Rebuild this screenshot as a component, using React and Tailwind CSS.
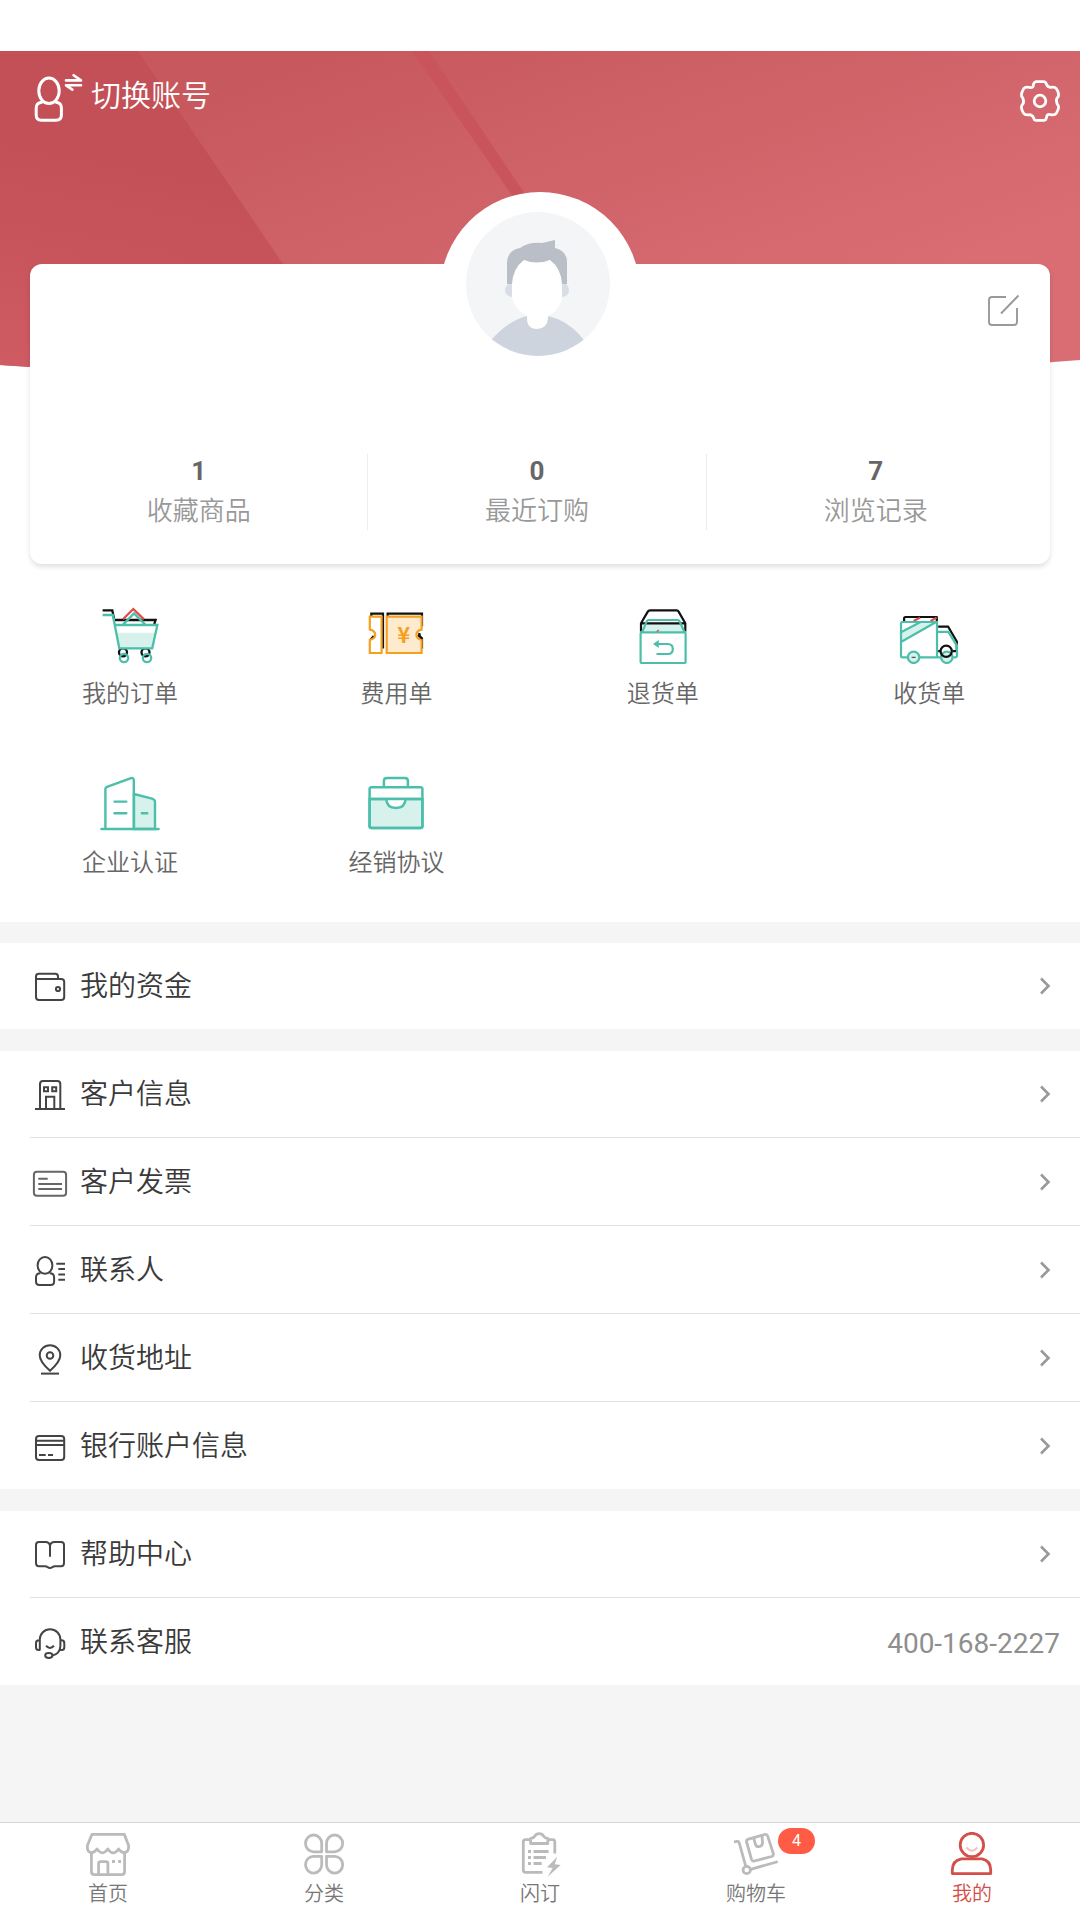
import React, { useState } from "react";

const TEAL = "#4bbfaa";
const MINT = "#d7f2ec";

function SwitchUserIcon() {
  return (
    <svg width="54" height="50" viewBox="0 0 54 50" fill="none" stroke="#fff" strokeWidth="3" strokeLinecap="round" strokeLinejoin="round">
      <ellipse cx="19" cy="17.8" rx="10.2" ry="12.8" />
      <path d="M11.7 29.2C8.2 29.6 6.2 31.6 6.2 35V42Q6.2 47.3 11.4 47.3H26Q31.4 47.3 31.4 42V35C31.4 31.6 29.7 29.6 26.2 29.2" />
      <path d="M36 7.4H51L43.6 2.2M51 12.3H36L42.4 16.6" strokeWidth="2.6" />
    </svg>
  );
}

function GearIcon() {
  return (
    <svg width="44" height="44" viewBox="-22 -22 44 44" fill="none" stroke="#fff" strokeWidth="2.8" strokeLinejoin="round">
      <circle r="5.8" />
      <path d="M-4 -19.4H4Q6 -19 6.6 -16.6T10.5 -13.6Q14.5 -14.6 16.3 -12.4T18.6 -6.6Q18.8 -4.6 17.2 -3T17.2 3Q18.8 4.6 18.6 6.6T16.3 12.4Q14.5 14.6 10.5 13.6T6.6 16.6Q6 19 4 19.4H-4Q-6 19 -6.6 16.6T-10.5 13.6Q-14.5 14.6 -16.3 12.4T-18.6 6.6Q-18.8 4.6 -17.2 3T-17.2 -3Q-18.8 -4.6 -18.6 -6.6T-16.3 -12.4Q-14.5 -14.6 -10.5 -13.6T-6.6 -16.6Q-6 -19 -4 -19.4Z" />
    </svg>
  );
}

function HeaderBackground() {
  return (
    <svg className="absolute inset-0" width="1080" height="320" viewBox="0 51 1080 320">
      <defs>
        <linearGradient id="left" gradientUnits="userSpaceOnUse" x1="60" y1="51" x2="0" y2="371">
          <stop offset="0.3" stopColor="#c35056" />
          <stop offset="1" stopColor="#cf5b63" />
        </linearGradient>
        <linearGradient id="main" gradientUnits="userSpaceOnUse" x1="340" y1="51" x2="500" y2="500">
          <stop offset="0" stopColor="#c7595e" />
          <stop offset="0.85" stopColor="#d96d73" />
          <stop offset="1" stopColor="#d96d73" />
        </linearGradient>
      </defs>
      <clipPath id="sheet">
        <path d="M0 51H1080V360Q540 402 0 365Z" />
      </clipPath>
      <g clipPath="url(#sheet)">
        <rect y="51" width="1080" height="330" fill="url(#main)" />
        <path d="M0 51H138L356 371H0Z" fill="url(#left)" />
        <path d="M412 51H429L525 194L560 246H546L511 194Z" fill="#c9545c" />
      </g>
    </svg>
  );
}

function Avatar() {
  return (
    <svg width="144" height="144" viewBox="466 212 144 144">
      <clipPath id="face">
        <circle cx="538" cy="284" r="72" />
      </clipPath>
      <circle cx="538" cy="284" r="72" fill="#f3f5f7" />
      <g clipPath="url(#face)">
        <path d="M480 356L492 339Q508 321 527 316H548Q569 321 583 339L596 356Z" fill="#ced4de" />
        <path d="M512 283Q505 284 505 290T512 297ZM562 283Q569 284 569 290T562 297Z" fill="#d8dee4" />
        <path d="M507 284V262Q508 250 520 248Q528 242 542 243L555 240V248Q567 251 567 262V284H512Z" fill="#babfc7" />
        <path d="M512 284Q513 268 524 260Q537 265 550 260Q561 268 562 284V294Q562 309 548 316V318Q547 329 537 329T527 318V316Q512 308 512 294Z" fill="#fff" />
      </g>
    </svg>
  );
}

function EditIcon() {
  return (
    <svg width="34" height="34" viewBox="0 0 34 34" fill="none" stroke="#999" strokeWidth="1.9">
      <path d="M20 3H6Q3 3 3 6V28Q3 31 6 31H28Q31 31 31 28V14" />
      <path d="M15 19.5L32.5 1.5" />
    </svg>
  );
}

function OrderIcon() {
  return (
    <svg width="60" height="60" viewBox="0 0 60 60" fill="none" strokeWidth="2.3">
      <path d="M2.6 6.3H12.3L14 14.5M15 16H55.6L54 21" stroke="#111" />
      <circle cx="23" cy="48.3" r="4" stroke="#111" />
      <circle cx="45.5" cy="48.3" r="4" stroke="#111" />
      <path d="M23 15.3L33.3 5L44 15.3" stroke="#e04b48" />
      <path d="M16 28.7H55.7L52.2 44.3H19.5Z" fill={MINT} />
      <path d="M2.6 11H12.8L19.3 44.3H52.2L57.4 21H14.6M23 20.6L34 9.4L45.3 20.6" stroke={TEAL} />
      <circle cx="24" cy="54" r="4.2" stroke={TEAL} />
      <circle cx="47" cy="54" r="4.2" stroke={TEAL} />
    </svg>
  );
}

function FeeIcon() {
  return (
    <svg width="60" height="60" viewBox="-0.8 0 60 60" fill="none" strokeWidth="2.2">
      <path d="M4.5 13V9.7H16.2V44.5M20.8 13V9.7H55.2V22M55.2 44.5V34.5L51 31M3.8 35.5L7 32" stroke="#111" />
      <path d="M3 12.7H14.8V49H3V35.8Q8.4 35 8.4 30.8T3 25.6Z" fill="#fff" stroke="#f6a01f" />
      <path d="M19.9 12.7H54.8V25.6Q49.6 26.6 49.6 30.8T54.8 35.8V49H19.9Z" fill="#feebcd" stroke="#f6a01f" />
      <path d="M52.6 29Q52 32 55.4 34.5" stroke="#111" />
      <text x="36.9" y="39.2" textAnchor="middle" fill="#f6a01f" stroke="none" fontSize="22" fontWeight="700" fontFamily="'Noto Sans CJK SC', sans-serif">¥</text>
    </svg>
  );
}

function ReturnIcon() {
  return (
    <svg width="60" height="60" viewBox="0 0 60 60" fill="none" strokeWidth="2.2" strokeLinejoin="round">
      <path d="M10 27.5L13.5 19H46.5L51 27.5Z" fill={MINT} />
      <path d="M8 27.5V19.3L14.8 7.6Q15.6 6.3 17 6.3H43.6Q45 6.3 45.6 7.6L52.3 19.3V27.5M8 19.3H52.3" stroke="#111" />
      <path d="M9.2 28L13.7 17.4Q14.3 16 15.7 16H44.6Q46 16 46.6 17.4L51.4 28" stroke={TEAL} />
      <rect x="7.6" y="28.4" width="45" height="30.6" rx="1.2" stroke={TEAL} />
      <path d="M23.5 27.4L26 26" stroke="#e04b48" strokeWidth="1.2" />
      <path d="M23.5 50H34.8Q39.8 50 39.8 45T34.8 40H24" stroke={TEAL} />
      <path d="M20 40L25.8 36V44Z" fill={TEAL} />
    </svg>
  );
}

function ReceiveIcon() {
  return (
    <svg width="60" height="60" viewBox="-0.6 0 60 60" fill="none" strokeWidth="2.2" strokeLinejoin="round">
      <path d="M1.4 28.3L21 18H37.2L1.4 38Z" fill={MINT} />
      <path d="M49 24L57.5 38V52L54 40L48 28Z" fill={MINT} />
      <path d="M4.5 17V14.5Q4.5 13 6 13H37.2V17.5M38.5 22.7H48.6L57.2 37.5V47.2H53M38.5 47.2H41" stroke="#111" />
      <path d="M14 17L20.5 13.6M31 17L37 13.6" stroke="#e04b48" />
      <path d="M8 53.3H3Q1.4 53.3 1.4 51.8V19.6Q1.4 18 3 18H37.4V53.3H20M1.4 28.3L21 18M1.4 38L36.5 18M38 27.8H48.7L57.4 41.5V51.6Q57.4 53.3 55.6 53.3H53.5M37 53.3H41" stroke={TEAL} />
      <circle cx="14" cy="53.3" r="5.7" fill={MINT} stroke={TEAL} />
      <circle cx="47.2" cy="53.3" r="5.7" fill={MINT} stroke={TEAL} />
      <path d="M12 53.3H16" stroke="#333" strokeWidth="1" />
      <circle cx="46.6" cy="47.2" r="5.6" stroke="#111" />
    </svg>
  );
}

function CompanyIcon() {
  return (
    <svg width="60" height="60" viewBox="0 0 60 60" fill="none" stroke={TEAL} strokeWidth="2.4" strokeLinecap="round">
      <path d="M34 21L52 25.6Q55 26.4 55 29V56H34Z" fill={MINT} />
      <path d="M1.4 56H58.6M5.4 56V16Q5.4 14.4 7 13.8L31 5.2Q33.8 4.4 33.8 7.5V56" />
      <path d="M14.5 28.6H26.3M14.5 40.3H26.3M41.8 40.3H47.3" />
    </svg>
  );
}

function ContractIcon() {
  return (
    <svg width="60" height="60" viewBox="-0.2 0 60 60" fill="none" stroke={TEAL} strokeWidth="2.5">
      <path d="M3.4 26H56.2V53Q56.2 55 54.2 55H5.4Q3.4 55 3.4 53Z" fill={MINT} />
      <rect x="3.4" y="14.3" width="52.8" height="40.7" rx="2" />
      <path d="M17.7 14V8Q17.7 5 20.7 5H38.7Q41.7 5 41.7 8V14" />
      <path d="M20 26Q20.5 35 29.7 35T39.4 26" fill="#fff" />
      <path d="M3.4 26H56.2" />
    </svg>
  );
}

function RowIcon({ children, color = "#444" }) {
  return (
    <svg className="mt-0.5 shrink-0" width="36" height="36" viewBox="0 0 36 36" fill="none" stroke={color} strokeWidth="2">
      {children}
    </svg>
  );
}

const rowIcons = {
  wallet: (
    <RowIcon>
      <path d="M4 10V7.5Q4 4.8 6.8 4.8H23.2Q26 4.8 26 7.5V10M4 10H29.2Q32.2 10 32.2 13V28Q32.2 31 29.2 31H7Q4 31 4 28V9" />
      <circle cx="26" cy="20" r="2.1" />
    </RowIcon>
  ),
  building: (
    <RowIcon>
      <path d="M3 32H33M8 32V7Q8 4 11 4H25.3Q28.3 4 28.3 7V32M14 32V19.8H22.3V32" />
      <path d="M12 10.2H16V14.2H12ZM20.2 10.2H24.2V14.2H20.2Z" />
    </RowIcon>
  ),
  invoice: (
    <RowIcon color="#666">
      <rect x="1.9" y="6.8" width="32.2" height="24" rx="3" />
      <path d="M6.3 13.7H15.7M6.3 19H30M6.3 24H30" />
    </RowIcon>
  ),
  contact: (
    <RowIcon>
      <ellipse cx="13" cy="12.4" rx="7.4" ry="8.4" />
      <path d="M8.5 20.2C5.5 20.2 4 21.8 4 24.5V28.5Q4 32 7.5 32H18.6Q22.1 32 22.1 28.5V24.5C22.1 21.8 20.5 20.2 17.6 20.2" />
      <path d="M24.3 10.7H33M26.3 16H33M26.3 21.5H33M26.3 26.7H33" />
    </RowIcon>
  ),
  pin: (
    <RowIcon>
      <path d="M18 29.8C12 24.5 7.7 20 7.7 14.3A10.3 10.1 0 0 1 28.3 14.3C28.3 20 24 24.5 18 29.8Z" />
      <circle cx="18" cy="14.5" r="3.3" />
      <path d="M9 32.6H27" />
    </RowIcon>
  ),
  card: (
    <RowIcon>
      <rect x="4" y="7" width="28.2" height="24" rx="3" />
      <path d="M4 11.8H32M4 16H32M7 26H13.7M16 26H21" />
    </RowIcon>
  ),
  book: (
    <RowIcon>
      <path d="M18 19.7V9Q17.5 4.9 13.5 4.9H7Q4 4.9 4 8V26Q4 29.2 7 29.2H13Q14.6 29.2 15.6 30.2Q18 31.8 20.4 30.2Q21.4 29.2 23 29.2H29Q32 29.2 32 26V8Q32 4.9 29 4.9H22.5Q18.5 4.9 18 9" />
    </RowIcon>
  ),
  service: (
    <RowIcon>
      <path d="M7.8 25.5V14.5A10.2 10.2 0 0 1 28.4 14.5V21Q28 29 20.3 30.5M8 15.3H7Q4 15.3 4 18V22.5Q4 25 7 25H8M28.4 15.3H29.5Q32.3 15.3 32.3 18V22.5Q32.3 25 29.5 25H28" />
      <path d="M14 20.8Q18 25 22 20.8" />
      <ellipse cx="16.8" cy="30.5" rx="3.6" ry="2.4" />
    </RowIcon>
  ),
};

function TabIcon({ children, color = "#bbb" }) {
  return (
    <svg width="44" height="46" viewBox="0 0 44 46" fill="none" stroke={color} strokeWidth="2.8" strokeLinejoin="round">
      {children}
    </svg>
  );
}

const tabs = [
  {
    label: "首页",
    icon: (
      <TabIcon>
        <path d="M6 2.3H38.3L42.6 13.5Q43 20.3 38.2 20.6Q35 20.6 32.6 17Q30 20.8 27.2 20.8T21.8 17Q19 20.8 16.4 20.8T11 17Q8.6 20.6 5.6 20.6Q.8 20.3 1.4 13.5Z" />
        <path d="M5.4 20V39.5Q5.4 42.6 8.5 42.6H35.5Q38.6 42.6 38.6 39.5V20M12.6 42V31.5Q12.6 29.6 14.5 29.6H20Q21.9 29.6 21.9 31.5V42" />
        <path d="M26 29.5H29M32.2 29.5H35" />
      </TabIcon>
    ),
  },
  {
    label: "分类",
    icon: (
      <TabIcon>
        <path d="M19.7 19.8H11.5A8.1 8.4 0 1 1 19.7 11.5ZM24.5 19.8H32.6A8.1 8.4 0 1 0 24.5 11.5ZM19.7 24.3H11.5A8.1 8.4 0 1 0 19.7 32.5ZM24.5 24.3H32.6A8.1 8.4 0 1 1 24.5 32.5Z" />
      </TabIcon>
    ),
  },
  {
    label: "闪订",
    icon: (
      <TabIcon>
        <path d="M24.5 40.4H7.5Q5.3 40.4 5.3 38.2V9.8Q5.3 7.6 7.5 7.6H12M30.5 7.6H34.6Q36.8 7.6 36.8 9.8V21.5" />
        <path d="M12.6 11.5V6.5Q15.5 6.3 16.7 4.2Q18.2 1.6 21.2 1.6T25.7 4.2Q27 6.3 29.8 6.5V11.5Z" />
        <path d="M10 19.5H13M15.5 19.5H30.6M10 25.5H13M15.5 25.5H28M10 31.5H13M15.5 31.5H23.7" />
        <path d="M39.2 24.7L29 35.3L34.7 36L29.6 44.7L42.7 33L36.8 32.3Z" fill="#bbb" stroke="none" />
      </TabIcon>
    ),
  },
  {
    label: "购物车",
    badge: 4,
    icon: (
      <TabIcon>
        <path d="M.2 9.8L3 9.3Q4.6 9 5.2 10.8L11.6 33.7M16.6 37.3L42.6 30" strokeLinecap="round" />
        <circle cx="12.7" cy="38" r="3.7" />
        <path d="M14.3 7.2L30.6 2.5Q33 1.9 33.7 4.2L39.3 21.5Q39.9 23.8 37.6 24.5L20.5 29Q18.2 29.5 17.5 27.3L12.6 10Q12 7.9 14.3 7.2Z" />
        <path d="M19.8 6.2L21.3 12Q22.3 15.3 25.6 14.5T28.5 10.5L28 3.6" />
      </TabIcon>
    ),
  },
  {
    label: "我的",
    icon: (
      <TabIcon color="#d34f49">
        <circle cx="21.9" cy="13" r="11.7" />
        <path d="M16.5 15.5Q21.9 22 27.3 15.5" stroke="#f8bfbf" strokeWidth="2" />
        <path d="M11.5 26.8H32Q40.7 28.5 40.7 38V41.6H2.3V38Q2.3 28.5 11.5 26.8Z" />
      </TabIcon>
    ),
  },
];

const stats = [
  { value: 1, label: "收藏商品" },
  { value: 0, label: "最近订购" },
  { value: 7, label: "浏览记录" },
];

const shortcuts = [
  { label: "我的订单", icon: <OrderIcon /> },
  { label: "费用单", icon: <FeeIcon /> },
  { label: "退货单", icon: <ReturnIcon /> },
  { label: "收货单", icon: <ReceiveIcon /> },
  { label: "企业认证", icon: <CompanyIcon /> },
  { label: "经销协议", icon: <ContractIcon /> },
];

const customerRows = [
  { label: "客户信息", icon: "building", height: "h-[87px]" },
  { label: "客户发票", icon: "invoice", height: "h-[88px]" },
  { label: "联系人", icon: "contact", height: "h-[88px]" },
  { label: "收货地址", icon: "pin", height: "h-[88px]" },
  { label: "银行账户信息", icon: "card", height: "h-[87px]" },
];

function MenuRow({ icon, label, value, height = "h-[87px]", last }) {
  return (
    <div className="bg-white pl-[30px]">
      <div className={`flex items-center pl-0.5 ${height} ${last ? "" : "border-b border-[#e2e2e2]"}`}>
        {rowIcons[icon]}
        <span className="ml-3 flex-1 pt-0.5 text-[28px] leading-10 text-[#3a3a3a]">{label}</span>
        {value ? (
          <span className="mr-5 pt-1 text-[28px] leading-10 text-[#8f8f8f]">{value}</span>
        ) : (
          <svg className="mr-[28px]" width="14" height="18" viewBox="0 0 14 18" fill="none" stroke="#999" strokeWidth="2.6">
            <path d="M3 1.5L10.5 9L3 16.5" />
          </svg>
        )}
      </div>
    </div>
  );
}

function App() {
  const [active, setActive] = useState("我的");

  return (
    <div className="flex h-[1920px] w-[1080px] flex-col overflow-hidden bg-[#f5f5f5] font-[Roboto,'Noto_Sans_CJK_SC_DemiLight','Noto_Sans_CJK_SC',sans-serif]">
      <div className="h-[922px] bg-white pt-[51px]">
        <header className="relative h-[213px]">
          <HeaderBackground />
          <div className="relative flex items-start justify-between pl-[30px] pr-[18px]">
            <button className="flex items-start pt-[22px] text-white">
              <SwitchUserIcon />
              <span className="ml-[7px] pt-px text-[30px] leading-[44px]">切换账号</span>
            </button>
            <button className="pt-7">
              <GearIcon />
            </button>
          </div>
        </header>

        <section className="relative mx-[30px] h-[300px] rounded-xl bg-white pt-[190px] shadow-[0_3px_5px_rgba(0,0,0,0.12)]">
          {/* avatar pokes out over the top edge of the card */}
          <div className="absolute -top-[72px] left-[410px] size-[200px] rounded-full bg-white pl-[26px] pt-5">
            <Avatar />
          </div>
          <button className="absolute top-[30px] right-[30px]">
            <EditIcon />
          </button>
          <div className="mr-[5px] grid h-[75px] grid-cols-3 divide-x divide-[#ededed]">
            {stats.map((s) => (
              <div key={s.label} className="flex flex-col items-center">
                <span className="text-[26px] leading-[34px] font-bold text-[#666]">{s.value}</span>
                <span className="mt-1 text-[26px] leading-[38px] text-[#999]">{s.label}</span>
              </div>
            ))}
          </div>
        </section>

        <section className="grid grid-cols-[repeat(4,260px)] gap-x-[6.4px] pt-10">
          {shortcuts.map((s) => (
            <button key={s.label} className="flex h-[169px] flex-col items-center">
              {s.icon}
              <span className="mt-[13px] text-2xl leading-[34px] text-[#666]">{s.label}</span>
            </button>
          ))}
        </section>
      </div>

      <div className="mt-[21px]">
        <MenuRow icon="wallet" label="我的资金" height="h-[86px]" last />
      </div>

      <div className="mt-[22px]">
        {customerRows.map((row, i) => (
          <MenuRow key={row.label} {...row} last={i === customerRows.length - 1} />
        ))}
      </div>

      <div className="mt-[22px]">
        <MenuRow icon="book" label="帮助中心" />
        <MenuRow icon="service" label="联系客服" value="400-168-2227" last />
      </div>

      <nav className="mt-auto flex h-[98px] border-t border-[#d5d5d5] bg-white">
        {tabs.map((tab) => (
          <button key={tab.label} onClick={() => setActive(tab.label)} className="relative flex flex-1 flex-col items-center pt-[9px]">
            {tab.icon}
            <span className={`mt-px text-xl leading-[30px] ${active === tab.label ? "text-[#d34f49]" : "text-[#777]"}`}>{tab.label}</span>
            {tab.badge && (
              <span className="absolute top-[5px] left-[130px] flex h-[26px] w-[37px] items-center justify-center rounded-full bg-[#ff5b45] text-base text-white">
                {tab.badge}
              </span>
            )}
          </button>
        ))}
      </nav>
    </div>
  );
}

export default App;
